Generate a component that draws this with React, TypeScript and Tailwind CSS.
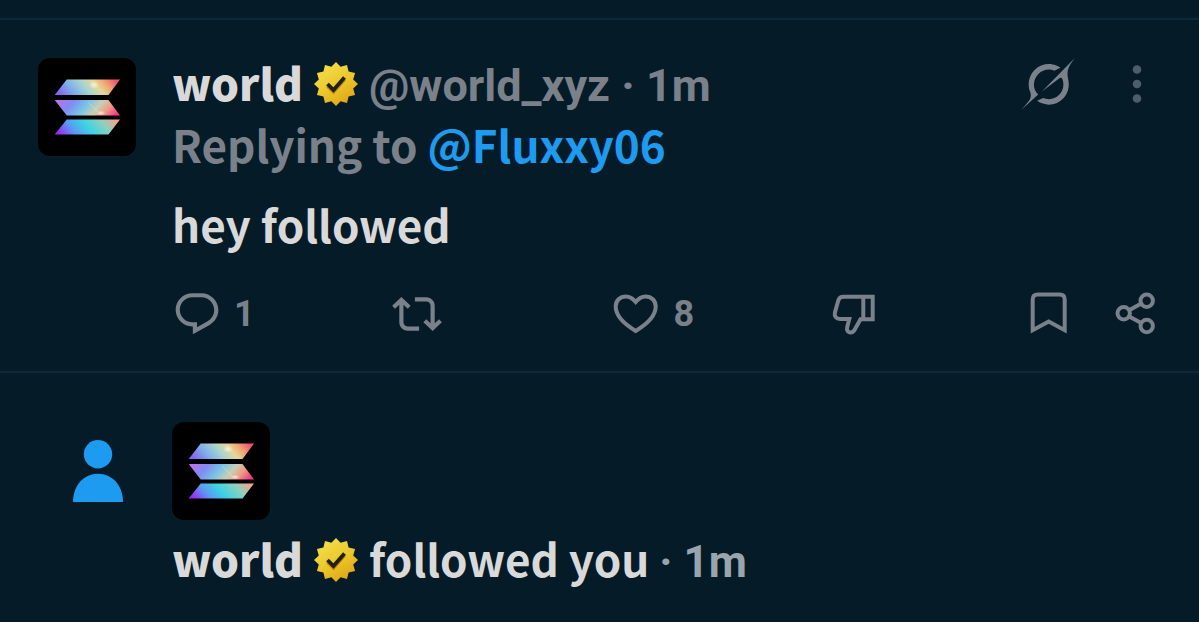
import type { ReactNode } from 'react';

const badgePoints = Array.from({ length: 24 }, (_, i) => {
  const radius = i % 2 === 0 ? 22 : 17.8;
  const angle = (i * Math.PI) / 12;
  return `${22 + radius * Math.sin(angle)},${22 - radius * Math.cos(angle)}`;
}).join(' ');

function GoldBadge({ id }: { id: string }) {
  return (
    <svg viewBox="0 0 44 44" className="mt-1 size-11 shrink-0 self-center" role="img" aria-label="Verified">
      <defs>
        <linearGradient id={id} x1="0.2" y1="0" x2="0.8" y2="1">
          <stop offset="0" stopColor="#f3e04e" />
          <stop offset="0.5" stopColor="#ebc92c" />
          <stop offset="1" stopColor="#dfa012" />
        </linearGradient>
      </defs>
      <polygon points={badgePoints} fill={`url(#${id})`} />
      <path d="M13.5 22.5l6 6 11-12.5" fill="none" stroke="#c8860e" strokeWidth="3.6" transform="translate(0 1.4)" />
      <path d="M13.5 22l6 6 11-12.5" fill="none" stroke="#1d2118" strokeWidth="3.8" />
    </svg>
  );
}

function Avatar({ id }: { id: string }) {
  return (
    <svg viewBox="0 0 98 98" className="size-[98px] shrink-0 rounded-xl bg-black" role="img" aria-label="world">
      <defs>
        <linearGradient id={`${id}-a`} x1="0" y1="0.6" x2="1" y2="0.4">
          <stop offset="0" stopColor="#8463ee" />
          <stop offset="0.25" stopColor="#7fb0ea" />
          <stop offset="0.48" stopColor="#a9d6cf" />
          <stop offset="0.66" stopColor="#e6d698" />
          <stop offset="0.82" stopColor="#f0a56f" />
          <stop offset="1" stopColor="#ee5478" />
        </linearGradient>
        <linearGradient id={`${id}-b`} x1="0" y1="0.4" x2="1" y2="0.6">
          <stop offset="0" stopColor="#b874ee" />
          <stop offset="0.22" stopColor="#7f8cf2" />
          <stop offset="0.45" stopColor="#79c4e6" />
          <stop offset="0.65" stopColor="#c9cfb4" />
          <stop offset="0.82" stopColor="#f09a80" />
          <stop offset="1" stopColor="#ef3f8c" />
        </linearGradient>
        <linearGradient id={`${id}-c`} x1="0" y1="0.6" x2="1" y2="0.4">
          <stop offset="0" stopColor="#9a2cf2" />
          <stop offset="0.25" stopColor="#5b98f4" />
          <stop offset="0.5" stopColor="#3cd3e4" />
          <stop offset="0.78" stopColor="#8fd0be" />
          <stop offset="1" stopColor="#f5a48a" />
        </linearGradient>
        <radialGradient id={`${id}-glow`}>
          <stop offset="0" stopColor="#fff" stopOpacity="0.7" />
          <stop offset="1" stopColor="#fff" stopOpacity="0" />
        </radialGradient>
      </defs>
      <path d="M28.7 21.5H82L70.5 37H16.7z" fill={`url(#${id}-a)`} />
      <path d="M16.7 42H70.5L82 57.5H28.7z" fill={`url(#${id}-b)`} />
      <path d="M28.7 61.5H82L70.5 76.5H16.7z" fill={`url(#${id}-c)`} />
      <ellipse cx="56" cy="27" rx="5" ry="4" fill={`url(#${id}-glow)`} />
      <ellipse cx="63" cy="55" rx="5" ry="2.5" fill={`url(#${id}-glow)`} />
      <path d="M50 44l10 10" stroke="#fff" strokeOpacity="0.25" strokeWidth="1" />
    </svg>
  );
}

function LineIcon({ children }: { children: ReactNode }) {
  return (
    <svg viewBox="0 0 50 50" className="size-[50px]" fill="none" stroke="currentColor" strokeWidth="4">
      {children}
    </svg>
  );
}

function SolidIcon({ d }: { d: string }) {
  return (
    <svg viewBox="0 0 24 24" className="size-[50px]" fill="currentColor">
      <path d={d} />
    </svg>
  );
}

function Action({ label, count, children }: { label: string; count?: number; children: ReactNode }) {
  return (
    <button type="button" aria-label={label} className="flex items-center gap-3 text-4xl leading-[50px]">
      {children}
      {count !== undefined && <span className="font-['Roboto',sans-serif]">{count}</span>}
    </button>
  );
}

export default function App() {
  return (
    <main className="min-h-screen bg-[#051b28] pt-[18px] font-['Noto_Sans_CJK_JP','Noto_Sans',sans-serif] text-[44px] leading-[62px] font-bold text-[#d9d9d9]">
      {/* Reply */}
      <article className="flex gap-9 border-y-2 border-[#0f2838] px-[38px] pt-[31px] pb-8">
        <div className="pt-[7px]">
          <Avatar id="reply-avatar" />
        </div>
        <div className="min-w-0 flex-1">
          <header className="flex items-center justify-between">
            <div className="flex items-baseline gap-[11px]">
              <span className="font-black">world</span>
              <GoldBadge id="reply-badge" />
              <span className="font-['Roboto',sans-serif] text-[45px] leading-none text-[#7a818a]">@world_xyz · 1m</span>
            </div>
            <div className="mt-1 flex items-center gap-[38px]">
              <button type="button" aria-label="Explain this post" className="text-[#7a818a]">
                <svg viewBox="0 0 33 32" className="h-[52px] w-[54px]" fill="currentColor">
                  <path d="M12.745 20.54l10.97-8.19c.539-.4 1.307-.244 1.564.38 1.349 3.288.746 7.241-1.938 9.955-2.683 2.714-6.417 3.31-9.83 1.954l-3.728 1.745c5.347 3.697 11.84 2.782 15.898-1.324 3.219-3.255 4.216-7.692 3.284-11.693l.008.009c-1.351-5.878.332-8.227 3.782-13.031L33 0l-4.54 4.59v-.014L12.743 20.544m-2.263 1.987c-3.837-3.707-3.175-9.446.1-12.755 2.42-2.449 6.388-3.448 9.852-1.979l3.72-1.737c-.67-.49-1.53-1.017-2.515-1.387-4.455-1.854-9.789-.931-13.41 2.728-3.483 3.523-4.579 8.94-2.697 13.561 1.405 3.454-.899 5.898-3.22 8.364C1.49 30.2.666 31.074 0 32l10.478-9.466" />
                </svg>
              </button>
              <button type="button" aria-label="More" className="text-[#4d5e6a]">
                <svg viewBox="0 0 48 48" className="size-12" fill="currentColor">
                  <circle cx="24" cy="9.5" r="4.3" />
                  <circle cx="24" cy="24" r="4.3" />
                  <circle cx="24" cy="38.5" r="4.3" />
                </svg>
              </button>
            </div>
          </header>
          <p className="text-[#7a818a]">
            Replying to <a href="#fluxxy06" className="text-[#1d9bf0]">@Fluxxy06</a>
          </p>
          <p className="mt-[18px]">hey followed</p>

          <div className="mt-[34px] grid grid-cols-[2fr_2fr_2fr_3fr] text-[#7a818a]">
            <Action label="Reply" count={1}>
              <SolidIcon d="M1.751 10c0-4.42 3.584-8 8.005-8h4.366c4.49 0 8.129 3.64 8.129 8.13 0 2.96-1.607 5.68-4.196 7.11l-8.054 4.46v-3.69h-.067c-4.49.1-8.183-3.51-8.183-8.01zm8.005-6c-3.317 0-6.005 2.69-6.005 6 0 3.37 2.77 6.08 6.138 6.01l.351-.01h1.761v2.3l5.087-2.81c1.951-1.08 3.163-3.13 3.163-5.36 0-3.39-2.744-6.13-6.129-6.13H9.756z" />
            </Action>
            <Action label="Repost">
              <SolidIcon d="M4.5 3.88l4.432 4.14-1.364 1.46L5.5 7.55V16c0 1.1.896 2 2 2H13v2H7.5c-2.209 0-4-1.79-4-4V7.55L1.432 9.48.068 8.02 4.5 3.88zM16.5 6H11V4h5.5c2.209 0 4 1.79 4 4v8.45l2.068-1.93 1.364 1.46-4.432 4.14-4.432-4.14 1.364-1.46 2.068 1.93V8c0-1.1-.896-2-2-2z" />
            </Action>
            <Action label="Like" count={8}>
              <LineIcon>
                <path d="M23.7 12.9C20.5 9 17.3 7.4 13.9 7.4C8 7.4 3.7 11.6 3.7 17.6C3.7 27.5 12 35 23.7 42C35.4 35 43.7 27.5 43.7 17.6C43.7 11.6 39.4 7.4 33.5 7.4C30.1 7.4 26.9 9 23.7 12.9z" />
              </LineIcon>
            </Action>
            <div className="flex items-center justify-between">
              <Action label="Dislike">
                <LineIcon>
                  <path d="M32.3 7.7H12.5Q8.3 7.7 7.3 11.5L3.9 23.5C3 27.5 5.5 30 9 30H18.3L16.2 38C15.2 42 17.5 43.4 19.5 43.4C21.5 43.4 22.8 42.3 23.8 40.5L29.5 30.3H41.7V7.7H32.3V30.3" />
                </LineIcon>
              </Action>
              <div className="flex gap-[37px]">
                <Action label="Bookmark">
                  <LineIcon>
                    <path d="M8.7 41.2V10.5Q8.7 5.5 13.7 5.5H35.7Q40.7 5.5 40.7 10.5V41.2L24.7 32.6z" />
                  </LineIcon>
                </Action>
                <Action label="Share">
                  <LineIcon>
                    <circle cx="12.7" cy="24.3" r="6.2" />
                    <circle cx="35.7" cy="11.7" r="6.2" />
                    <circle cx="35.7" cy="37" r="6.2" />
                    <path d="M18.2 21.2L30.2 14.6M18.2 27.4L30.2 34" />
                  </LineIcon>
                </Action>
              </div>
            </div>
          </div>
        </div>
      </article>

      {/* New follower */}
      <article className="flex gap-9 px-[38px] pt-[49px]">
        <div className="flex w-[98px] justify-end pt-[18px] pr-[13px]">
          <svg viewBox="0 0 50 62" className="h-[62px] w-[50px] text-[#1d9bf0]" fill="currentColor" aria-hidden="true">
            <circle cx="25" cy="14.2" r="14.2" />
            <path d="M0 62C0 45 11 33.7 25 33.7S50 45 50 62z" />
          </svg>
        </div>
        <div className="min-w-0 flex-1">
          <Avatar id="follow-avatar" />
          <p className="mt-[7px] flex items-baseline gap-[11px]">
            <span className="font-black">world</span>
            <GoldBadge id="follow-badge" />
            <span>
              followed you <span className="font-['Roboto',sans-serif] leading-none text-[#9aa4ad]">· 1m</span>
            </span>
          </p>
        </div>
      </article>
    </main>
  );
}
